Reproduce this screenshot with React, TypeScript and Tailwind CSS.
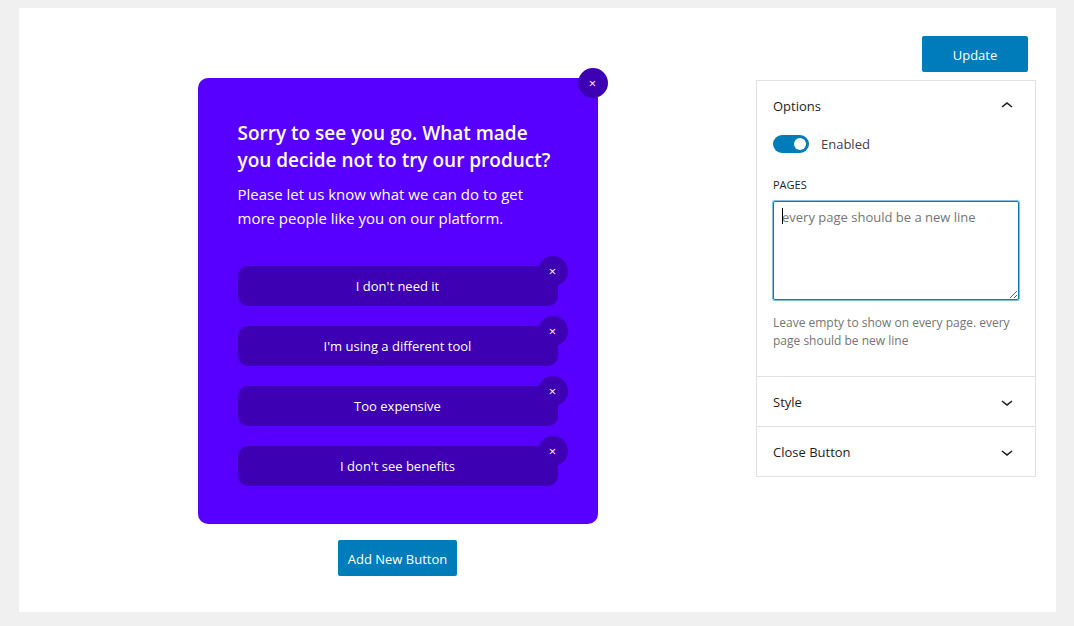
import { useState, type ReactNode } from "react";

const REASONS = [
  "I don't need it",
  "I'm using a different tool",
  "Too expensive",
  "I don't see benefits",
];

function RemoveButton({ label, onClick }: { label: string; onClick?: () => void }) {
  return (
    <button
      type="button"
      aria-label={label}
      onClick={onClick}
      className="absolute -top-2.5 -right-2.5 flex size-[30px] items-center justify-center rounded-full bg-[#3d00b2] text-[13px] leading-4 font-medium text-white"
    >
      ×
    </button>
  );
}

function Chevron({ up }: { up: boolean }) {
  return (
    <svg viewBox="0 0 24 24" className="size-6 fill-[#1e1e1e]" aria-hidden="true">
      {up ? (
        <path d="M6.5 12.4L12 8l5.5 4.4-.9 1.2L12 10l-4.5 3.6-1-1.2z" />
      ) : (
        <path d="M17.5 11.6L12 16l-5.5-4.4.9-1.2L12 14l4.6-3.6.9 1.2z" />
      )}
    </svg>
  );
}

function Section({
  title,
  initiallyOpen = false,
  children,
}: {
  title: string;
  initiallyOpen?: boolean;
  children?: ReactNode;
}) {
  const [open, setOpen] = useState(initiallyOpen);
  return (
    <section className="border-b border-[#e0e0e0]">
      <h2>
        <button
          type="button"
          aria-expanded={open}
          onClick={() => setOpen(!open)}
          className="flex h-[49px] w-full items-center justify-between px-4 text-[13px] leading-5 font-medium text-[#1e1e1e]"
        >
          {title}
          <Chevron up={open} />
        </button>
      </h2>
      {open && children}
    </section>
  );
}

export default function App() {
  const [reasons, setReasons] = useState(REASONS);
  const [enabled, setEnabled] = useState(true);

  return (
    <div className="min-h-screen bg-[#f0f0f0] pt-2 pr-[18px] pb-3.5 pl-[19px] font-['Open_Sans','Noto_Sans',sans-serif] text-[13px] leading-5">
      <main className="flex bg-white px-5 pt-7 pb-9">
        <div className="flex flex-1 flex-col items-center pt-[42px]">
          <div className="relative w-full max-w-[400px] rounded-[10px] bg-[#5700ff] px-10 pt-10 pb-[38px] text-white">
            <RemoveButton label="Close popup" />
            <h1 className="mt-0.5 text-[19px] leading-[27px] font-semibold">
              Sorry to see you go. What made you decide not to try our product?
            </h1>
            <p className="mt-2 text-[15px] leading-6">
              Please let us know what we can do to get more people like you on our platform.
            </p>
            <ul className="mt-9 flex flex-col gap-5">
              {reasons.map((reason, i) => (
                <li key={i} className="relative">
                  <button type="button" className="block h-10 w-full rounded-[10px] bg-[#3d00b2]">
                    {reason}
                  </button>
                  <RemoveButton
                    label={`Remove ${reason}`}
                    onClick={() => setReasons(reasons.filter((_, n) => n !== i))}
                  />
                </li>
              ))}
            </ul>
          </div>
          <button
            type="button"
            onClick={() => setReasons([...reasons, "New button"])}
            className="mt-4 h-9 rounded-xs bg-[#007cba] px-2.5 pt-0.5 text-white"
          >
            Add New Button
          </button>
        </div>

        <aside className="flex w-[280px] flex-col">
          <button
            type="button"
            className="mr-2 h-9 w-[106px] self-end rounded-xs bg-[#007cba] pt-0.5 text-white"
          >
            Update
          </button>
          <div className="mt-2 border border-b-0 border-[#e0e0e0]">
            <Section title="Options" initiallyOpen>
              <div className="px-4 pt-1 pb-[26px]">
                <label className="flex h-5 items-center gap-3 text-[#3c434a]">
                  <input
                    type="checkbox"
                    checked={enabled}
                    onChange={(e) => setEnabled(e.target.checked)}
                    className="peer sr-only"
                  />
                  <span className="flex h-[18px] w-9 items-center rounded-full bg-[#8c8f94] px-[3px] peer-checked:justify-end peer-checked:bg-[#007cba]">
                    <span className="size-3 rounded-full bg-white" />
                  </span>
                  Enabled
                </label>
                <label
                  htmlFor="pages"
                  className="mt-[23px] block text-[11px] leading-4 font-medium text-[#1e1e1e] uppercase"
                >
                  Pages
                </label>
                <div className="relative mt-2">
                  <textarea
                    id="pages"
                    placeholder="every page should be a new line"
                    className="block h-[99px] w-full rounded-xs border border-[#007cba] px-2 py-1.5 text-[13px] leading-[18px] text-[#2c3338] ring-1 ring-[#007cba]/50 outline-none placeholder:text-[#757575]"
                  />
                  <span className="absolute top-[7px] left-[9px] h-4 w-px bg-black" aria-hidden="true" />
                </div>
                <p className="mt-3.5 text-[12px] leading-[18px] text-[#757575]">
                  Leave empty to show on every page. every page should be new line
                </p>
              </div>
            </Section>
            <Section title="Style" />
            <Section title="Close Button" />
          </div>
        </aside>
      </main>
    </div>
  );
}
